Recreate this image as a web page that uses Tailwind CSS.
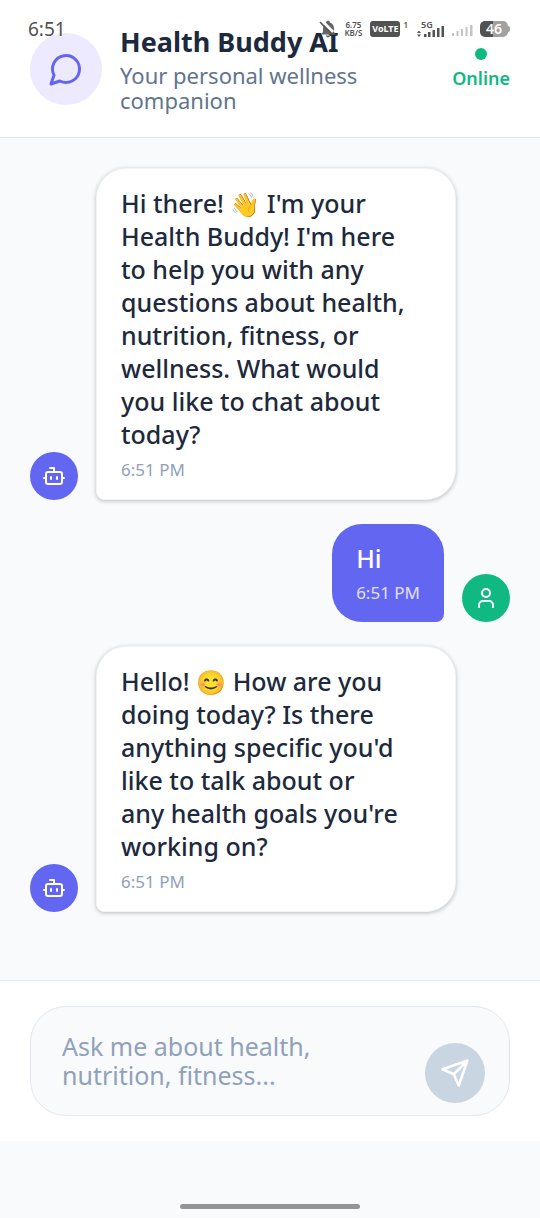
<!DOCTYPE html>
<html lang="en">
<head>
<meta charset="utf-8">
<meta name="viewport" content="width=device-width, initial-scale=1">
<title>Health Buddy AI</title>
<script src="https://cdn.jsdelivr.net/npm/@tailwindcss/browser@4"></script>
</head>
<body class="relative flex min-h-screen flex-col bg-slate-50 font-['Noto_Sans',sans-serif] text-slate-800">

<!-- System status bar, floating over the app header -->
<div class="absolute inset-x-0 top-0 z-10 flex h-[58px] items-center justify-between pl-[28px] pr-[32px] text-neutral-600">
  <span class="text-[19px] leading-6">6:51</span>
  <div class="flex items-center">
    <svg class="mr-[6px] h-[18px] w-[18px]" viewBox="0 0 18 18" aria-hidden="true">
      <path fill="#666" d="M7 2.500C7 0 11 0 11 2.500c3 1 4 3.500 4 6V12l2 2.500H2L4 12V8.500C4 5.500 5 3.500 7 2.500ZM7 15.500h4a2 2 0 0 1-4 0Z"/>
      <path stroke="#fff" stroke-width="3" d="M3 1l11 11"/>
      <path stroke="#525252" stroke-width="1.500" d="M1 2l13 13"/>
    </svg>
    <span class="mr-[7px] w-[20px] text-center text-[8px] font-semibold leading-[8px]">6.75<br>KB/S</span>
    <span class="w-[30px] rounded-[3px] bg-neutral-600 text-center text-[9px] font-bold leading-[16px] text-white">VoLTE</span>
    <span class="ml-[3px] mr-[9px] self-start text-[8px] font-semibold leading-[9px]">1</span>
    <span class="mr-[7px] flex flex-col">
      <span class="pl-[4px] text-[9px] font-semibold leading-[8px]">5G</span>
      <svg class="-mt-[3px] h-[12px] w-[28px]" viewBox="0 0 28 12" fill="#525252" aria-hidden="true">
        <path d="M0 7l2-2.500L4 7ZM0 8.500h4L2 11ZM7 8h2.500v3H7ZM11 6h2.500v5H11ZM15.500 4H18v7h-2.500ZM20 2h2.500v9H20ZM24.500 0H27v11h-2.500Z"/>
      </svg>
    </span>
    <svg class="mr-[7px] mt-[4px] h-[12px] w-[21px]" viewBox="0 0 21 12" fill="#c4c4c4" aria-hidden="true">
      <path d="M0 8h2v3H0ZM4.500 6h2v5h-2ZM9 4h2v7H9ZM13.500 2h2v9h-2ZM18 0h2.500v11H18Z"/>
    </svg>
    <span class="relative w-[28px] rounded-[5px] bg-linear-to-r from-neutral-600 from-45% to-neutral-400 to-45% text-center text-[14px] font-semibold leading-[16px] text-white">46
      <span class="absolute -right-[2px] top-[5px] h-[6px] w-[2px] rounded-r bg-neutral-400"></span>
    </span>
  </div>
</div>

<header class="flex items-center border-b border-slate-200 bg-white px-[30px] pb-6 pt-[25px]">
  <div class="flex size-[72px] shrink-0 items-center justify-center rounded-full bg-[#ede9fe]">
    <svg class="size-9" viewBox="0 0 24 24" fill="none" stroke="#6366f1" stroke-width="2" stroke-linecap="round" stroke-linejoin="round" aria-hidden="true"><path d="M7.900 20A9 9 0 1 0 4 16.100L2 22Z"/></svg>
  </div>
  <div class="ml-[18px] min-w-0 flex-1">
    <h1 class="whitespace-nowrap text-[27px] font-bold leading-[34px]">Health Buddy AI</h1>
    <p class="mt-[4px] text-[22px] leading-[25px] text-slate-500">Your personal wellness<br>companion</p>
  </div>
  <div class="flex flex-col items-center gap-[6px]">
    <span class="size-3 rounded-full bg-[#10b981]"></span>
    <span class="text-[18px] font-semibold leading-6 text-[#10b981]">Online</span>
  </div>
</header>

<main class="flex flex-1 flex-col gap-6 px-[30px] pt-[30px]">
  <div class="flex items-end gap-[18px]">
    <div class="flex size-12 shrink-0 items-center justify-center rounded-full bg-[#6366f1]">
      <svg class="size-6" viewBox="0 0 24 24" fill="none" stroke="#fff" stroke-width="2" stroke-linecap="round" stroke-linejoin="round" aria-hidden="true"><path d="M12 8V4H8M2 14h2M20 14h2M15 13v2M9 13v2"/><rect x="4" y="8" width="16" height="12" rx="2"/></svg>
    </div>
    <div class="w-3/4 rounded-[30px] rounded-bl-[8px] border border-slate-100 bg-white px-6 py-[18px] shadow-[0_1px_4px_rgba(0,0,0,0.25)]">
      <p class="whitespace-nowrap text-[25px] font-medium leading-[33px]">Hi there! <span class="text-[24px]">👋</span> I'm your<br>Health Buddy! I'm here<br>to help you with any<br>questions about health,<br>nutrition, fitness, or<br>wellness. What would<br>you like to chat about<br>today?</p>
      <time class="mt-[7px] block text-[17px] leading-[23px] text-slate-400">6:51 PM</time>
    </div>
  </div>

  <div class="flex items-end justify-end gap-[18px]">
    <div class="rounded-[30px] rounded-br-[8px] bg-[#6366f1] px-6 py-[18px] text-white">
      <p class="text-[25px] font-medium leading-[33px]">Hi</p>
      <time class="mt-[6px] block text-[17px] leading-[23px] text-white/80">6:51 PM</time>
    </div>
    <div class="flex size-12 shrink-0 items-center justify-center rounded-full bg-[#10b981]">
      <svg class="size-6" viewBox="0 0 24 24" fill="none" stroke="#fff" stroke-width="2" stroke-linecap="round" stroke-linejoin="round" aria-hidden="true"><path d="M19 21v-2a4 4 0 0 0-4-4H9a4 4 0 0 0-4 4v2"/><circle cx="12" cy="7" r="4"/></svg>
    </div>
  </div>

  <div class="flex items-end gap-[18px]">
    <div class="flex size-12 shrink-0 items-center justify-center rounded-full bg-[#6366f1]">
      <svg class="size-6" viewBox="0 0 24 24" fill="none" stroke="#fff" stroke-width="2" stroke-linecap="round" stroke-linejoin="round" aria-hidden="true"><path d="M12 8V4H8M2 14h2M20 14h2M15 13v2M9 13v2"/><rect x="4" y="8" width="16" height="12" rx="2"/></svg>
    </div>
    <div class="w-3/4 rounded-[30px] rounded-bl-[8px] border border-slate-100 bg-white px-6 py-[18px] shadow-[0_1px_4px_rgba(0,0,0,0.25)]">
      <p class="whitespace-nowrap text-[25px] font-medium leading-[33px]">Hello! <span class="text-[24px]">😊</span> How are you<br>doing today? Is there<br>anything specific you'd<br>like to talk about or<br>any health goals you're<br>working on?</p>
      <time class="mt-[7px] block text-[17px] leading-[23px] text-slate-400">6:51 PM</time>
    </div>
  </div>
</main>

<footer>
  <form class="border-t border-slate-200 bg-white px-[30px] pb-[25px] pt-[25px]">
    <div class="flex items-end rounded-[36px] border border-slate-200 bg-slate-50 pb-3 pl-[31px] pr-6 pt-[25px]">
      <textarea rows="2" aria-label="Message" placeholder="Ask me about health, nutrition, fitness..." class="mb-[13px] block min-w-0 flex-1 resize-none overflow-hidden pr-10 text-[25px] leading-[29px] outline-none placeholder:text-slate-400"></textarea>
      <button type="button" aria-label="Send" class="flex size-[60px] shrink-0 items-center justify-center rounded-full bg-slate-300">
        <svg class="size-[30px]" viewBox="0 0 24 24" fill="none" stroke="#fff" stroke-width="2" stroke-linecap="round" stroke-linejoin="round" aria-hidden="true"><path d="m22 2-7 20-4-9-9-4ZM22 2 11 13"/></svg>
      </button>
    </div>
  </form>
  <div class="flex h-[77px] items-end justify-center pb-[9px]">
    <div class="h-[5px] w-1/3 rounded-full bg-[#949596]"></div>
  </div>
</footer>
</body>
</html>
